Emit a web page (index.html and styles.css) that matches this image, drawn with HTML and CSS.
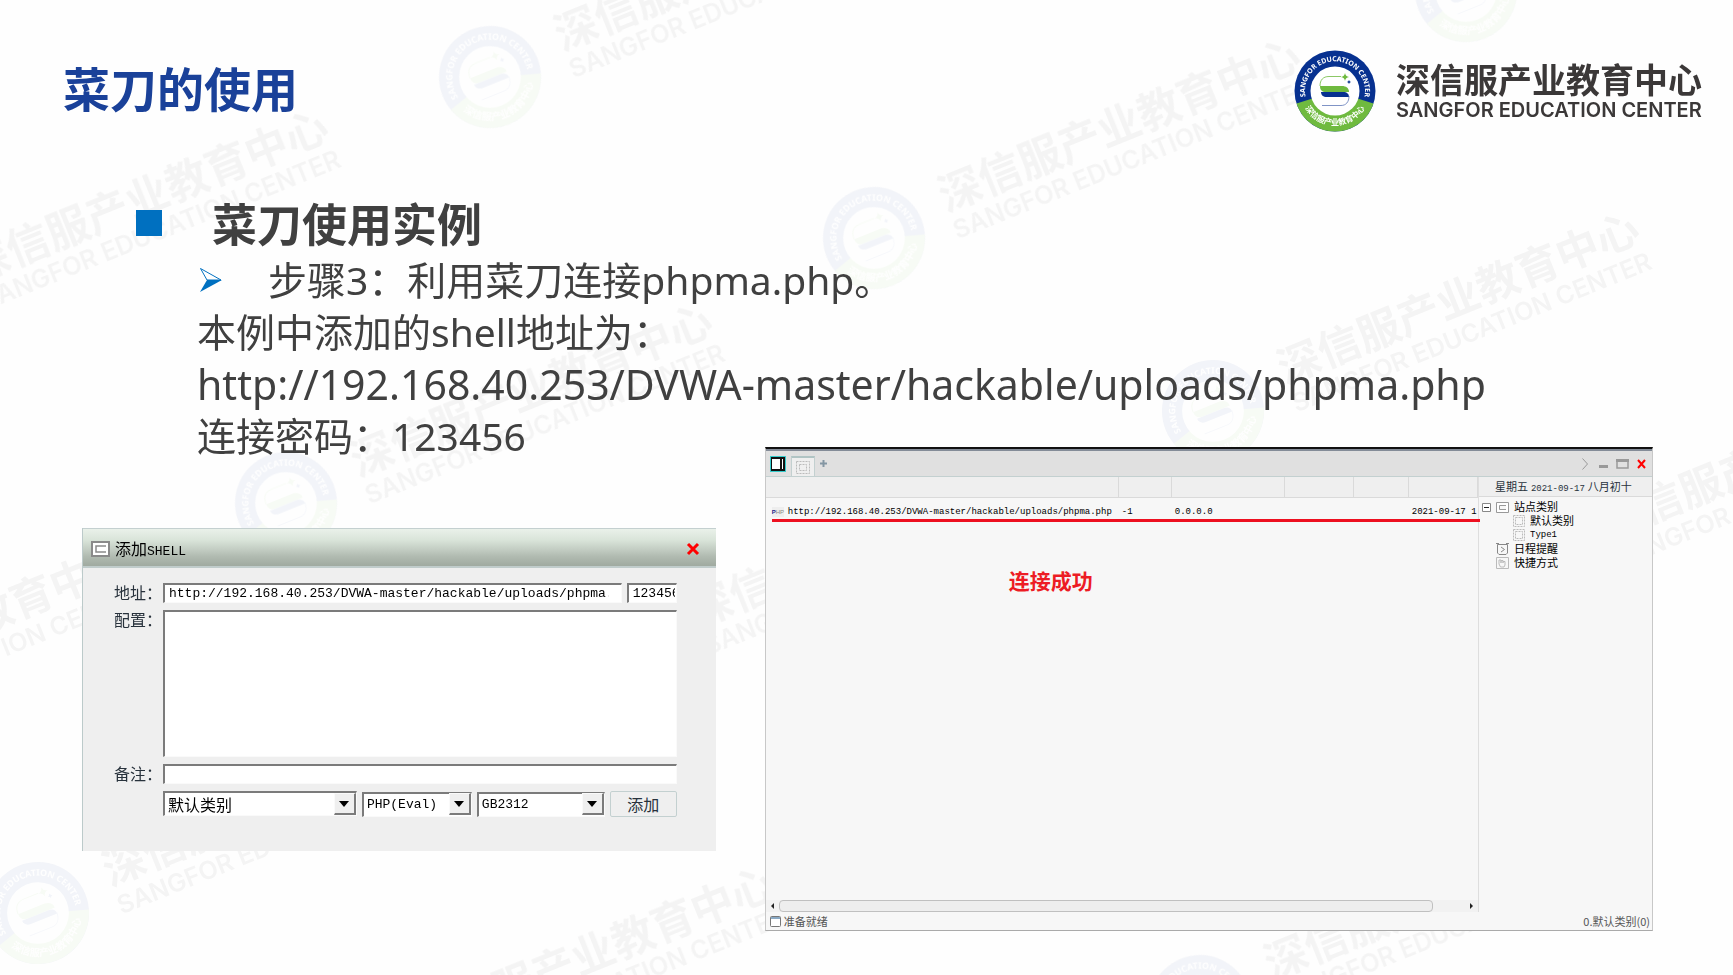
FILE: index.html
```html
<!DOCTYPE html>
<html lang="zh-CN">
<head>
<meta charset="utf-8">
<title>菜刀的使用</title>
<link rel="stylesheet" href="styles.css">
</head>
<body>
<main class="slide">
  <svg class="watermark" viewBox="0 0 1733 975" preserveAspectRatio="xMidYMid slice" aria-hidden="true">
    <defs>
      <path id="arc-top" d="M-29 8A30 30 0 1 1 29 8"/>
      <path id="arc-bottom" d="M-31 15A34.500 34.500 0 0 0 31 15"/>
      <g id="seal">
        <circle r="40.500" fill="#073190"/>
        <path d="M-38.500 12.500A40.500 40.500 0 0 0 38.500 12.500L22.500 7.500H-22.500Z" fill="#6fba3f"/>
        <circle r="24.500" fill="#fff"/>
        <text class="seal-en" fill="#fff" text-anchor="middle"><textPath href="#arc-top" startOffset="50%">SANGFOR EDUCATION CENTER</textPath></text>
        <text class="seal-cn" fill="#fff" text-anchor="middle"><textPath href="#arc-bottom" startOffset="50%">深信服产业教育中心</textPath></text>
        <path d="M-15 -5H7C11 -5 14 -3 14 1H-9C-13 1 -15 -1 -15 -5Z" fill="#6fba3f"/>
        <path d="M-14 1H8C12 1 14 3 14 6H-8C-12 6 -14 4 -14 1Z" fill="#073190"/>
        <path d="M-15 -5C-15 -11 -12 -14.500 -6 -14.500H6" fill="none" stroke="#6fba3f" stroke-width=".8"/>
        <path d="M14 5C14 11 11 14.500 6 14.500H-13" fill="none" stroke="#5f79b8" stroke-width=".8"/>
        <path d="M10 -18Q10.500 -14.500 14 -14Q10.500 -13.500 10 -10Q9.500 -13.500 6 -14Q9.500 -14.500 10 -18Z" fill="#6fba3f"/>
        <path d="M14 -11Q14.300 -9.300 16 -9Q14.300 -8.700 14 -7Q13.700 -8.700 12 -9Q13.700 -9.300 14 -11Z" fill="#073190"/>
      </g>
      <g id="brand">
        <use href="#seal"/>
        <text class="brand-cn" x="61" y="2" fill="#3b3838">深信服产业教育中心</text>
        <text class="brand-en" x="61" y="26" fill="#3b3838">SANGFOR EDUCATION CENTER</text>
      </g>
      <g id="mark" transform="rotate(-22) scale(1.260)"><use href="#brand"/></g>
    </defs>
    <g opacity=".050">
      <use href="#mark" transform="translate(490 77)"/>
      <use href="#mark" transform="translate(874 238)"/>
      <use href="#mark" transform="translate(1213 411)"/>
      <use href="#mark" transform="translate(286 503)"/>
      <use href="#mark" transform="translate(-98 309)"/>
      <use href="#mark" transform="translate(1466 -9)"/>
      <use href="#mark" transform="translate(38 913)"/>
      <use href="#mark" transform="translate(1200 1006)"/>
      <use href="#mark" transform="translate(1535 567)"/>
      <use href="#mark" transform="translate(625 654)"/>
      <use href="#mark" transform="translate(-293 742)"/>
      <use href="#mark" transform="translate(348 1066)"/>
    </g>
  </svg>

  <header class="slide-head">
    <h1 class="slide-title">菜刀的使用</h1>
    <svg class="logo" width="412" height="82" viewBox="-41 -41 412 82" role="img" aria-label="深信服产业教育中心"><use href="#brand"/></svg>
  </header>

  <section class="content">
    <h2 class="topic"><span class="square"></span>菜刀使用实例</h2>
    <p class="step"><svg class="arrow" width="24" height="26" viewBox="0 0 24 26"><path d="M1.500 1.500L22 13H8Z" fill="#fff" stroke="#0070c0"/><path d="M8 13H23L1 25Z" fill="#0070c0"/></svg>步骤3：利用菜刀连接phpma.php。</p>
    <p class="line">本例中添加的shell地址为：</p>
    <p class="line address">http://192.168.40.253/DVWA-master/hackable/uploads/phpma.php</p>
    <p class="line">连接密码：123456</p>
  </section>

  <section class="figures">
    <form class="dialog">
      <div class="dialog-bar">
        <svg width="19" height="16" viewBox="0 0 19 16"><path d="M1 1H18V15H1Z" fill="#fff" stroke="#8a8a8a" stroke-width="2"/><path d="M15 5H5V11H15" fill="none" stroke="#8a8a8a" stroke-width="1.500"/></svg>
        <span class="dialog-title">添加<span class="mono">SHELL</span></span>
        <button type="button" class="icon-button" aria-label="关闭"><svg width="14" height="14" viewBox="0 0 14 14"><path d="M2 2L12 12M12 2L2 12" stroke="#f00" stroke-width="3"/></svg></button>
      </div>
      <div class="fields">
        <label for="addr">地址：</label>
        <div class="pair">
          <input id="addr" class="sunken url" type="text" value="http://192.168.40.253/DVWA-master/hackable/uploads/phpma.php">
          <input class="sunken pass" type="text" value="123456" aria-label="密码">
        </div>
        <label for="conf">配置：</label>
        <textarea id="conf" class="sunken conf"></textarea>
        <label for="note">备注：</label>
        <input id="note" class="sunken note" type="text">
        <div class="options">
          <span class="pick pick-wide"><select class="sunken cjk" aria-label="类别"><option>默认类别</option></select><span class="drop"></span></span>
          <span class="pick pick-script"><select class="sunken" aria-label="脚本"><option>PHP(Eval)</option></select><span class="drop"></span></span>
          <span class="pick pick-code"><select class="sunken" aria-label="编码"><option>GB2312</option></select><span class="drop"></span></span>
          <button type="button" class="add">添加</button>
        </div>
      </div>
    </form>

    <div class="window">
      <div class="tabs">
        <svg width="16" height="16" viewBox="0 0 16 16"><path d="M.5 .5H15.500V15.500H.5Z" fill="#111" stroke="#3cc"/><path d="M2 3H10V13H2ZM12 3H13V13H12Z" fill="#fff"/></svg>
        <span class="tab"><svg width="14" height="13" viewBox="0 0 14 13" fill="none" stroke="#bbb" stroke-dasharray="2 1"><path d="M.5 .5H13.500V12.500H.5ZM3.500 3.500H10.500V9.500H3.500Z"/></svg></span>
        <button type="button" class="icon-button" aria-label="新标签"><svg width="7" height="7" viewBox="0 0 7 7"><path d="M3.500 0V7M0 3.500H7" stroke="#8496a3" stroke-width="2"/></svg></button>
        <span class="controls">
          <svg width="6" height="12" viewBox="0 0 6 12"><path d="M.5 .5L5.500 6L.5 11.500" fill="none" stroke="#999"/></svg>
          <svg width="9" height="12" viewBox="0 0 9 12"><path d="M0 7H9V10H0Z" fill="#999"/></svg>
          <svg width="13" height="12" viewBox="0 0 13 12"><path d="M1 2H12V10H1Z" fill="none" stroke="#999" stroke-width="1.500"/><path d="M0 1H13V4H0Z" fill="#999"/></svg>
          <svg width="9" height="12" viewBox="0 0 9 12"><path d="M1 2L8 10M8 2L1 10" stroke="#f00" stroke-width="2"/></svg>
        </span>
      </div>
      <div class="panes">
        <div class="list">
          <table class="sites">
            <colgroup><col class="c-url"><col class="c-n"><col class="c-ip"><col class="c-a"><col class="c-b"><col></colgroup>
            <thead><tr><th></th><th></th><th></th><th></th><th></th><th></th></tr></thead>
            <tbody><tr><td><span class="php"><b>P</b>HP</span>http://192.168.40.253/DVWA-master/hackable/uploads/phpma.php</td><td>-1</td><td>0.0.0.0</td><td></td><td></td><td>2021-09-17 1</td></tr></tbody>
          </table>
          <div class="underline"></div>
          <p class="success">连接成功</p>
          <div class="scroll"><span class="left"></span><span class="thumb"></span><span class="right"></span></div>
        </div>
        <aside class="side">
          <p class="date">星期五 <span class="small-mono">2021-09-17</span> 八月初十</p>
          <ul class="tree">
            <li><svg width="9" height="9" viewBox="0 0 9 9"><path d="M.5 .5H8.500V8.500H.5Z" fill="#fff" stroke="#888"/><path d="M2 4.500H7" stroke="#222"/></svg><svg width="13" height="11" viewBox="0 0 13 11" fill="#fff" stroke="#999"><path d="M.5 .5H12.500V10.500H.5ZM10 3.500H3.500V7.500H10"/></svg>站点类别</li>
            <li class="child"><svg width="12" height="12" viewBox="0 0 12 12" fill="none" stroke="#bbb" stroke-dasharray="2 1"><path d="M.5 .5H11.500V11.500H.5ZM2.500 2.500H9.500V9.500H2.500Z"/></svg>默认类别</li>
            <li class="child"><svg width="12" height="12" viewBox="0 0 12 12" fill="none" stroke="#bbb" stroke-dasharray="2 1"><path d="M.5 .5H11.500V11.500H.5ZM2.500 2.500H9.500V9.500H2.500Z"/></svg><span class="small-mono">Type1</span></li>
            <li class="item"><svg width="13" height="12" viewBox="0 0 13 12" fill="none" stroke="#888"><path d="M0 .5H3M10 .5H13M1.500 1.500H11.500V10L10 11.500H3L1.500 10ZM5 4L8.500 6.500L5 9"/></svg>日程提醒</li>
            <li class="item"><svg width="13" height="12" viewBox="0 0 13 12" fill="none" stroke="#bbb"><path d="M.5 .5H12.500V11.500H.5ZM4.500 10L3 7V3H5V6V3.500H7V6V4.500H9V8L8 10Z"/></svg>快捷方式</li>
          </ul>
        </aside>
      </div>
      <div class="status">
        <svg width="11" height="11" viewBox="0 0 11 11"><rect x=".5" y=".5" width="10" height="10" rx="1" fill="#fff" stroke="#777"/><path d="M1 2H10" stroke="#8aa9c4" stroke-width="2"/></svg>
        <span>准备就绪</span><span class="status-right">0.默认类别(0)</span>
      </div>
    </div>
  </section>
</main>
</body>
</html>
```
FILE: styles.css
```css
*, *::after { box-sizing: border-box; }
body {
  margin: 0;
  background: #fefefe;
  color: #404040;
  font-family: "Noto Sans", "Noto Sans CJK SC", sans-serif;
}
h1, h2, p, ul { margin: 0; padding: 0; }
ul { list-style: none; }
svg { display: block; flex: none; }
button, input, textarea, select { font: inherit; color: inherit; margin: 0; }

.slide { position: relative; isolation: isolate; min-height: 100vh; overflow: hidden; }
.watermark { position: absolute; inset: 0; width: 100%; height: 100%; z-index: -1; }
.brand-cn { font: 700 34px "Noto Sans CJK SC", sans-serif; }
.brand-en { font: 600 20px Inter, sans-serif; }
.seal-en { font: 700 7px "Noto Sans", sans-serif; }
.seal-cn { font: 700 8px "Noto Sans CJK SC", sans-serif; }

.slide-head {
  display: flex;
  justify-content: space-between;
  align-items: center;
  height: 181px;
  padding: 0 27px 0 63px;
}
.slide-title { padding-bottom: 8px; font: 700 47px/60px "Noto Sans CJK SC", sans-serif; color: #1a4199; }

.content { padding: 11px 0 0 197px; }
.topic {
  display: flex;
  align-items: center;
  gap: 50px;
  margin-left: -61px;
  font: 700 45px/62px "Noto Sans CJK SC", sans-serif;
}
.square { width: 26px; height: 26px; background: #0070c0; }
.step, .line { font-size: 39px; line-height: 52px; white-space: nowrap; }
.line.address { font-size: 41px; }
.step { display: flex; align-items: center; gap: 45px; padding-left: 2px; }

.figures {
  display: flex;
  align-items: flex-start;
  gap: 49px;
  margin-top: -15px;
  padding: 0 80px 43px 82px;
  font-size: 11px;
  color: #000;
}

.dialog {
  flex: 634 1 0;
  min-width: 0;
  margin-top: 81px;
  background: #efefef;
  border-left: 1px solid #bccaca;
  font-size: 16px;
}
.dialog-bar {
  display: flex;
  align-items: center;
  gap: 5px;
  height: 40px;
  padding: 2px 16px 0 8px;
  border-top: 1px solid #c4d0d0;
  border-bottom: 2px solid #c0cccb;
  background: linear-gradient(#eaf1ea, #d9e4d9 30%, #c3cdc3 55%, #b0bab0 75%, #a0aaa0);
}
.dialog-title { flex: 1; line-height: 24px; }
.mono { font: 13px "Liberation Mono", monospace; }
.icon-button { padding: 0; border: 0; background: none; }
.fields {
  display: grid;
  grid-template-columns: 49px 1fr;
  row-gap: 7px;
  padding: 15px 39px 34px 31px;
}
.fields label { color: #28323c; line-height: 20px; white-space: nowrap; }
.pair { display: flex; gap: 5px; }
.sunken {
  min-width: 0;
  border: 1px solid #fafafa;
  border-top: 2px solid #7b7b7b;
  border-left: 2px solid #7b7b7b;
  border-radius: 0;
  outline: 0;
  background: #fff;
  font: 13px "Liberation Mono", monospace;
  color: #000;
}
.url { flex: 1; height: 20px; padding: 0 12px 0 4px; }
.pass { width: 50px; height: 20px; padding: 0 1px 0 4px; }
.conf { width: 100%; height: 147px; resize: none; }
.note { width: 100%; height: 20px; }
.options { grid-column: 2; display: flex; gap: 5px; height: 26px; }
.pick { position: relative; min-width: 0; }
.pick-wide { flex: 194; }
.pick-script { flex: 110; }
.pick-code { flex: 128; }
.pick select { appearance: none; width: 100%; height: 25px; padding: 0 22px 0 3px; }
.pick .cjk { font: 16px/20px "Noto Sans CJK SC", sans-serif; }
.drop {
  position: absolute;
  top: 2px;
  right: 1px;
  width: 22px;
  height: 22px;
  border: 1px solid #fafafa;
  border-right: 2px solid #7b7b7b;
  border-bottom: 2px solid #7b7b7b;
  background: #efefef;
  pointer-events: none;
}
.drop::after {
  content: "";
  display: block;
  width: 10px;
  margin: 7px auto 0;
  border: 5px solid transparent;
  border-top: 6px solid #000;
  border-bottom: 0;
}
.add {
  flex: 65;
  padding: 0;
  border: 1px solid #c3d0d0;
  border-radius: 2px;
  background: #efefef;
  color: #28323c;
}

.window {
  flex: 888 1 0;
  min-width: 0;
  background: #f7f7f7;
  border: 1px solid #c8c8c8;
  border-top: 2px solid #111;
  border-bottom: 1px solid #aaa;
}
.tabs {
  display: flex;
  align-items: center;
  gap: 5px;
  height: 28px;
  padding: 0 6px 0 4px;
  border-top: 2px solid #848c98;
  border-bottom: 1px solid #c3d0d0;
  background: #e0e0e0;
}
.tab {
  display: flex;
  align-items: center;
  align-self: flex-end;
  height: 20px;
  padding: 0 4px;
  border: 1px solid #c3d0d0;
  border-top: 2px solid #b0c4c4;
  border-bottom: 0;
  background: #efefef;
}
.controls { display: flex; align-items: center; gap: 8px; margin-left: auto; }
.controls svg:first-child { margin-right: 3px; }
.panes { display: flex; height: 435px; }
.list { position: relative; flex: 1; min-width: 0; display: flex; flex-direction: column; }
.sites {
  width: 100%;
  table-layout: fixed;
  border-collapse: collapse;
  font: 9px/14px "Liberation Mono", monospace;
}
.c-url { width: 353px; }
.c-n { width: 53px; }
.c-ip { width: 113px; }
.c-a { width: 69px; }
.c-b { width: 55px; }
.sites th {
  height: 20px;
  padding: 0;
  background: #efefef;
  border-right: 1px solid #dadada;
  border-bottom: 1px solid #dadada;
}
.sites td { height: 29px; padding: 0 0 0 3px; white-space: nowrap; overflow: hidden; }
.sites td:first-child { padding-left: 6px; }
.php {
  display: inline-block;
  width: 12px;
  margin-right: 4px;
  font: 6px/10px "Liberation Sans", sans-serif;
  color: #888;
  background: #eee;
}
.php b { color: #22228c; }
.underline {
  position: absolute;
  top: 42px;
  left: 6px;
  right: -2px;
  height: 3px;
  background: #ed1020;
}
.success {
  margin-top: 39px;
  padding-left: 243px;
  font: 700 21px/30px "Noto Sans CJK SC", sans-serif;
  color: #ed1c24;
}
.scroll {
  display: flex;
  align-items: center;
  gap: 5px;
  height: 12px;
  margin-top: auto;
  padding: 0 5px;
  background: #f2f2f2;
}
.thumb { flex: 1; height: 12px; margin-right: 32px; border: 1px solid #c0c0c0; border-radius: 4px; background: #eee; }
.left, .right { border: 3px solid transparent; }
.left { border-left: 0; border-right-color: #222; }
.right { border-right: 0; border-left-color: #222; }
.side { width: 174px; border-left: 1px solid #dedede; }
.date {
  height: 20px;
  padding-left: 16px;
  border-bottom: 1px solid #dadada;
  background: #efefef;
  line-height: 19px;
  color: #28323c;
  white-space: nowrap;
}
.small-mono { font: 9px "Liberation Mono", monospace; }
.tree { padding: 3px 0 0 3px; }
.tree li { display: flex; align-items: center; gap: 5px; height: 14px; line-height: 14px; }
.tree .child { padding-left: 31px; }
.tree .item { padding-left: 14px; }
.status {
  display: flex;
  align-items: center;
  gap: 3px;
  height: 18px;
  padding: 0 2px 0 4px;
  color: #555;
}
.status-right { margin-left: auto; font-family: "Noto Sans CJK SC", sans-serif; }
```
